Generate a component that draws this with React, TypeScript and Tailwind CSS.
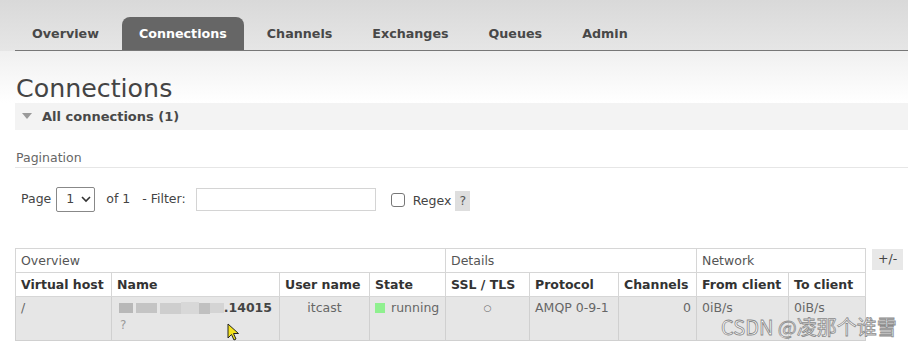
import React from "react";

const tabs = ["Overview", "Connections", "Channels", "Exchanges", "Queues", "Admin"];

export default function App() {
  return (
    <div className="relative w-[908px] h-[345px] overflow-hidden bg-white font-['DejaVu_Sans',Verdana,sans-serif] text-[#484848]">
      {/* Tab header */}
      <div className="h-[51px] bg-gradient-to-b from-[#d9d9d9] to-[#e6e6e6] pl-[15px] flex items-end">
        <ul className="flex w-full border-b border-[#777]">
          {tabs.map((t) => (
            <li
              key={t}
              className={
                t === "Connections"
                  ? "h-[33px] px-[17px] mr-[6px] flex items-center text-[12.7px] font-bold bg-[#666] text-white rounded-t-[8px]"
                  : "h-[33px] px-[17px] mr-[6px] flex items-center text-[12.7px] font-bold text-[#484848]"
              }
            >
              {t}
            </li>
          ))}
        </ul>
      </div>

      {/* Heading */}
      <div className="h-[52px] bg-gradient-to-b from-[#f0f0f0] to-white pl-[16px] pt-[23px]">
        <h1 className="text-[25.3px] leading-[29px] text-[#444] font-normal">Connections</h1>
      </div>

      <div className="pl-[15px]">
        {/* Section header */}
        <div className="h-[27px] bg-[#f3f3f3] flex items-center pl-[7px]">
          <svg width="10" height="7" viewBox="0 0 10 7" className="mr-[10px]">
            <polygon points="0,0 10,0 5,6" fill="#9a9a9a" />
          </svg>
          <span className="text-[13px] font-bold text-[#484848]">All connections (1)</span>
        </div>

        {/* Pagination */}
        <div className="pt-[20px] pb-[2px] border-b border-[#e6e6e6] text-[12.5px] leading-[15px] text-[#666] pl-[1px]">
          Pagination
        </div>

        <div className="mt-[19px] h-[25px] flex items-center pl-[6px] text-[12.5px] text-[#444]">
          <span>Page</span>
          <div className="ml-[5px] w-[39px] h-[25px] border border-[#888] rounded-[2px] flex items-center pl-[9px] gap-[7px] bg-white">
            <span>1</span>
            <svg width="10" height="7" viewBox="0 0 10 7">
              <polyline points="1,1 5,5 9,1" fill="none" stroke="#333" strokeWidth="1.6" />
            </svg>
          </div>
          <span className="ml-[11px]">of 1</span>
          <span className="ml-[12px]">- Filter:</span>
          <div className="ml-[10px] w-[180px] h-[23px] border border-[#d4d4d4] bg-white" />
          <div className="ml-[15px] w-[14px] h-[14px] border border-[#777] rounded-[3px] bg-white" />
          <span className="ml-[8px] mt-[3px]">Regex</span>
          <span className="ml-[4px] mt-[3px] w-[15px] h-[20px] bg-[#dedede] flex items-center justify-center text-[#555]">?</span>
        </div>

        {/* Table */}
        <div className="mt-[36px] flex items-start">
          <table className="border-collapse text-[12.5px] [table-layout:fixed] w-[851px]">
            <colgroup>
              <col className="w-[96px]" />
              <col className="w-[168px]" />
              <col className="w-[90px]" />
              <col className="w-[76px]" />
              <col className="w-[84px]" />
              <col className="w-[89px]" />
              <col className="w-[78px]" />
              <col className="w-[92px]" />
              <col className="w-[77px]" />
            </colgroup>
            <thead>
              <tr className="h-[24px] bg-white text-[#555]">
                <th colSpan={4} className="border border-[#d6d6d6] px-[5px] pt-[2px] text-left font-normal">Overview</th>
                <th colSpan={3} className="border border-[#d6d6d6] px-[5px] pt-[2px] text-left font-normal">Details</th>
                <th colSpan={2} className="border border-[#d6d6d6] px-[5px] pt-[2px] text-left font-normal">Network</th>
              </tr>
              <tr className="h-[24px] bg-white text-[#333]">
                {["Virtual host", "Name", "User name", "State", "SSL / TLS", "Protocol", "Channels", "From client", "To client"].map((h) => (
                  <th key={h} className="border border-[#d6d6d6] px-[5px] pt-[2px] text-left font-bold whitespace-nowrap">
                    {h}
                  </th>
                ))}
              </tr>
            </thead>
            <tbody>
              <tr className="h-[44px] bg-[#e6e6e6] text-[#666] align-top">
                <td className="border border-[#d0d0d0] px-[5px] pt-[2px]">/</td>
                <td className="border border-[#d0d0d0] px-[7px] pt-[2px]">
                  <div className="flex items-center h-[18px]">
                    <span className="inline-block w-[14px] h-[10px] bg-[#b8b8b8] mr-[3px]" />
                    <span className="inline-block w-[22px] h-[10px] bg-[#c4c4c4] mr-[3px]" />
                    <span className="inline-block w-[22px] h-[11px] bg-[#cecece]" />
                    <span className="inline-block w-[18px] h-[12px] bg-[#d8d8d8]" />
                    <span className="inline-block w-[12px] h-[11px] bg-[#c0c0c0]" />
                    <span className="inline-block w-[14px] h-[10px] bg-[#d4d4d4]" />
                    <span className="font-bold text-[#444]">.14015</span>
                  </div>
                  <div className="text-[#999] text-[12px] leading-[16px] pl-[1px]">?</div>
                </td>
                <td className="border border-[#d0d0d0] px-[5px] pt-[2px] text-center">itcast</td>
                <td className="border border-[#d0d0d0] px-[5px] pt-[2px] whitespace-nowrap">
                  <span className="inline-block w-[10px] h-[10px] bg-[#8ff08f] mr-[6px] align-[-1px]" />
                  running
                </td>
                <td className="border border-[#d0d0d0] px-[5px] pt-[2px] text-center text-[9px] leading-[18px]">○</td>
                <td className="border border-[#d0d0d0] px-[5px] pt-[2px] whitespace-nowrap">AMQP 0-9-1</td>
                <td className="border border-[#d0d0d0] px-[5px] pt-[2px] text-right">0</td>
                <td className="border border-[#d0d0d0] px-[5px] pt-[2px]">0iB/s</td>
                <td className="border border-[#d0d0d0] px-[5px] pt-[2px]">0iB/s</td>
              </tr>
            </tbody>
          </table>
          <div className="ml-[6px] mt-[1px] w-[31px] h-[21px] bg-[#e8e8e8] text-[12.5px] text-[#444] flex items-center justify-center">
            +/-
          </div>
        </div>
      </div>

      {/* Mouse cursor */}
      <svg className="absolute left-[227px] top-[323px]" width="14" height="20" viewBox="0 0 14 20">
        <path d="M1 1 L1 15 L4.5 11.5 L7 17 L9 16 L6.5 10.5 L11.5 10.5 Z" fill="#f3e21c" stroke="#222" strokeWidth="1" strokeLinejoin="round" />
      </svg>

      {/* Watermark */}
      <div className="absolute left-[721px] top-[315px] text-[20px] leading-[24px] text-white font-['Noto_Sans_CJK_SC',sans-serif] [-webkit-text-stroke:0.8px_#8a8a8a] whitespace-nowrap">
        CSDN @凌那个谁雪
      </div>
    </div>
  );
}
